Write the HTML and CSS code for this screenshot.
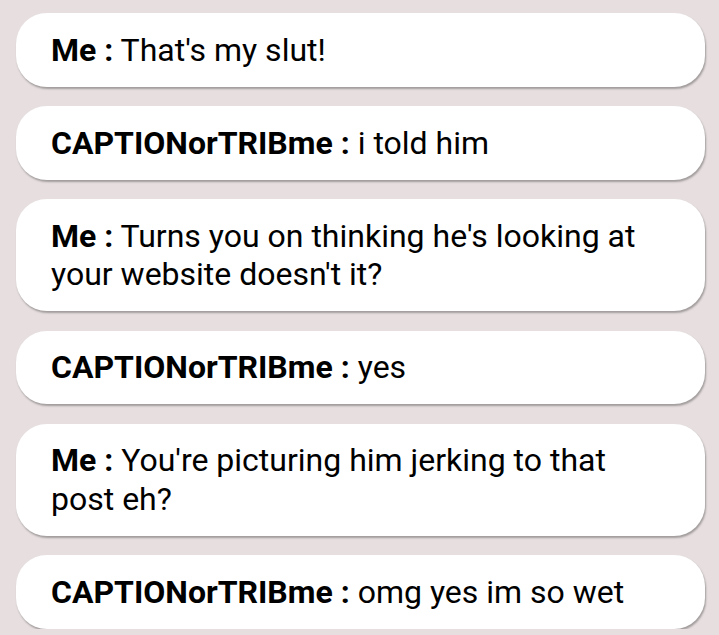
FILE: index.html
```html
<!DOCTYPE html>
<html>
<head>
<meta charset="utf-8">
<link rel="stylesheet" href="styles.css">
</head>
<body>
<div class="chat">
  <div class="bubble"><b>Me :</b> That's my slut!</div>
  <div class="bubble"><b>CAPTIONorTRIBme :</b> i told him</div>
  <div class="bubble"><b>Me :</b> Turns you on thinking he's looking at your website doesn't it?</div>
  <div class="bubble"><b>CAPTIONorTRIBme :</b> yes</div>
  <div class="bubble"><b>Me :</b> You're picturing him jerking to that post eh?</div>
  <div class="bubble"><b>CAPTIONorTRIBme :</b> omg yes im so wet</div>
</div>
</body>
</html>
```
FILE: styles.css
```css
html, body {
  margin: 0;
  padding: 0;
  background: #e7dfdf;
}
body {
  font-family: Roboto, "Liberation Sans", sans-serif;
  color: #000;
}
.chat {
  display: flex;
  flex-direction: column;
  gap: 19.5px;
  padding: 13px 14px 0 16px;
}
.bubble {
  background: #fff;
  border-radius: 31px;
  padding: 17.5px 35px 17.5px 35px;
  font-size: 32px;
  line-height: 38.5px;
  box-shadow: 1px 2px 2px rgba(0, 0, 0, 0.3);
}
.bubble b {
  font-weight: 700;
}
```
